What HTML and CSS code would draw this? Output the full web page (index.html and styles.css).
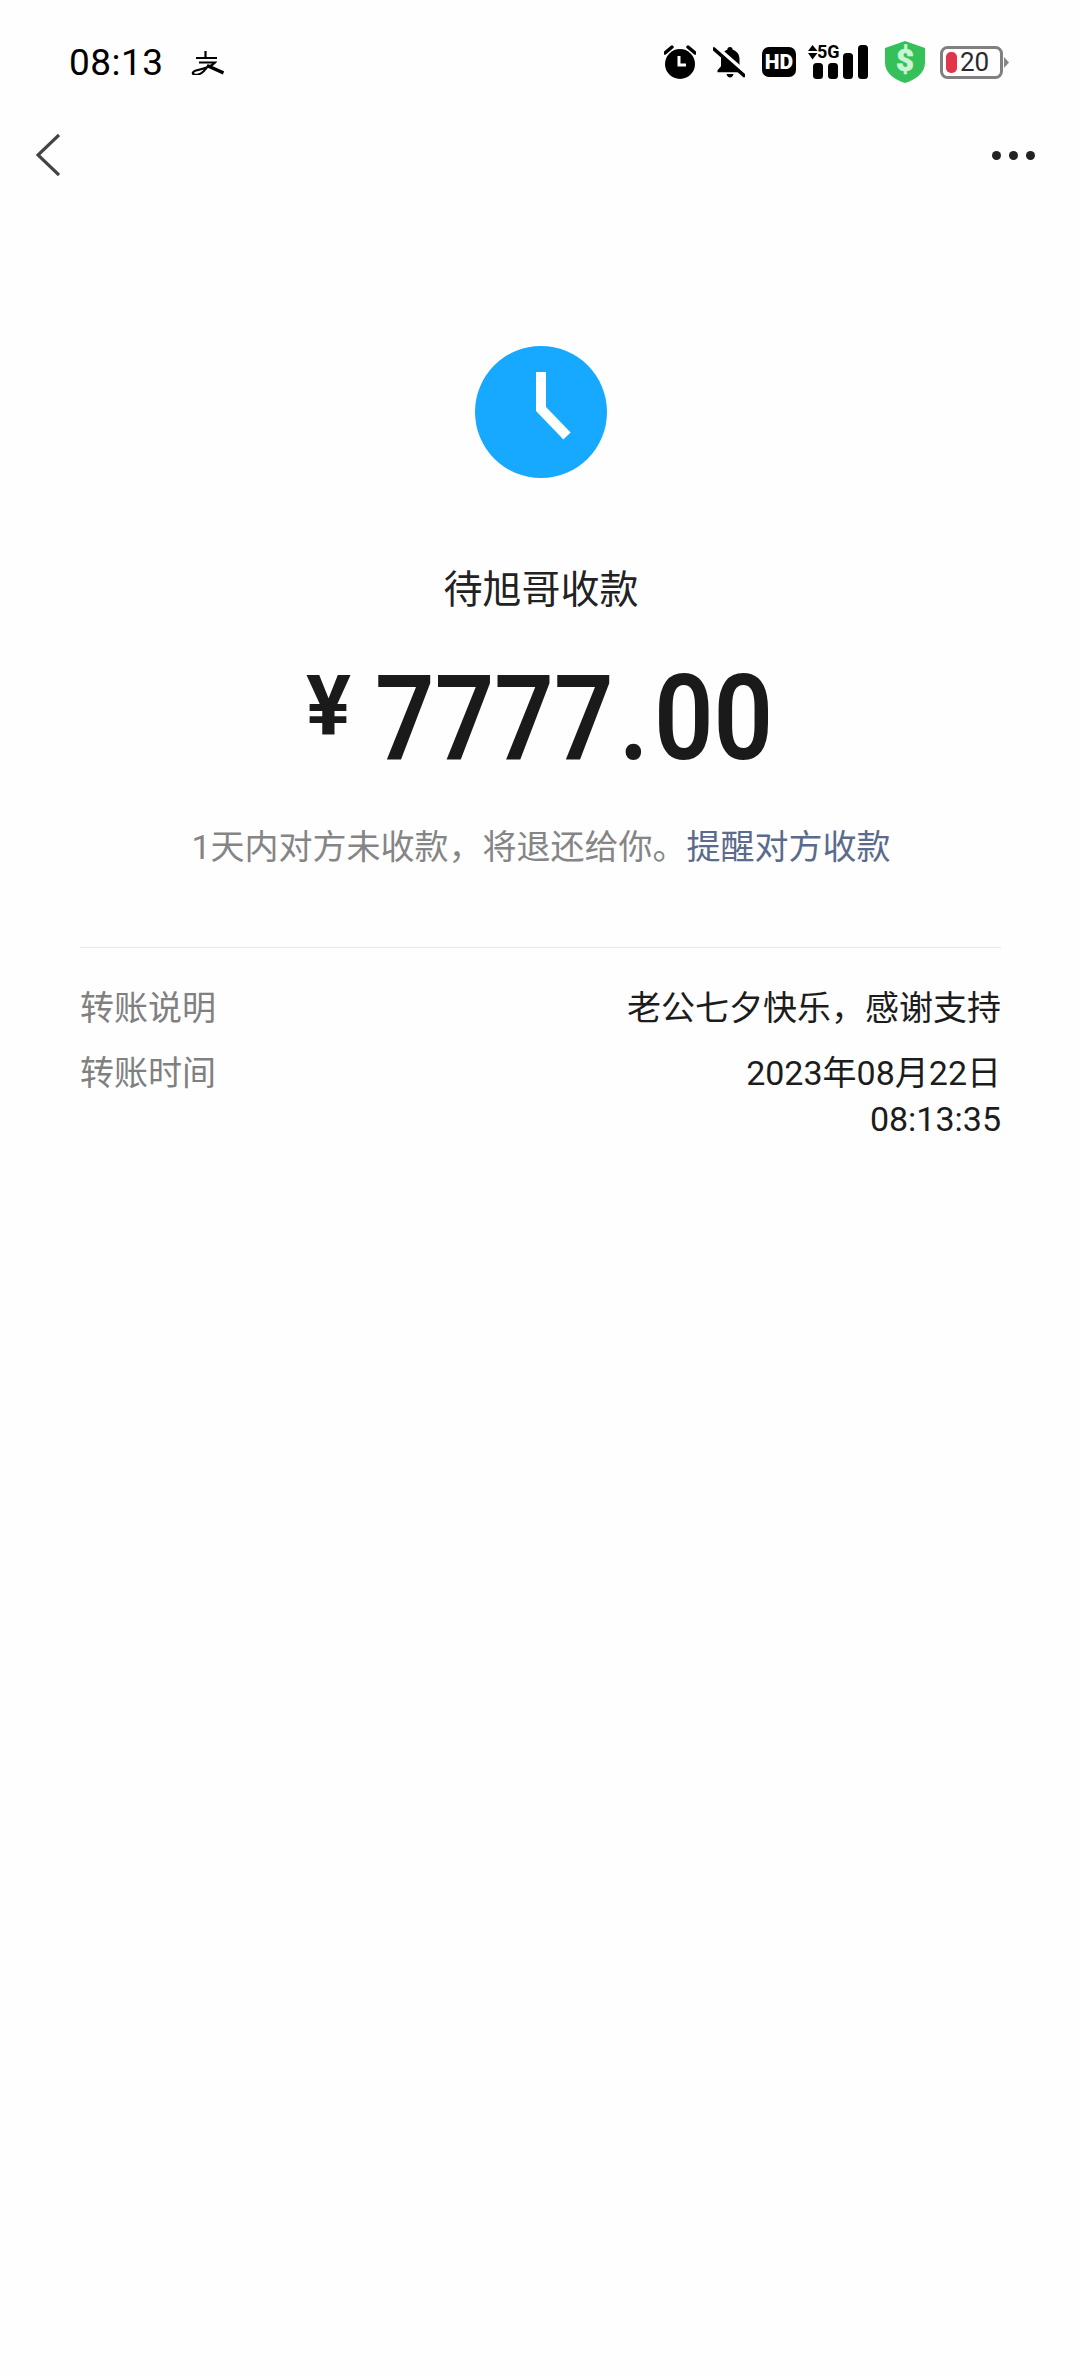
FILE: index.html
```html
<!DOCTYPE html>
<html>
<head>
    <title>转账详情</title>
    <link rel="stylesheet" href="styles.css">
</head>
<body>
    <div class="page">
        <!-- Status bar -->
        <div class="status-bar">
            <span class="time">08:13</span>
            <svg class="alipay-icon" viewBox="0 0 33 24" fill="none" stroke="#000">
                <path d="M14.500 0V7M5 7H26M8 11.500H24C21 15 12 18 5 19.500C0 21 1 24.500 7 23.500C12 22.500 15 18 17 15" stroke-width="2.200"/>
                <path d="M16 14.500L32.500 22" stroke-width="3.400"/>
            </svg>
            <div class="status-icons">
                <svg class="icon-alarm" viewBox="0 0 32 34">
                    <circle cx="16" cy="19" r="15"/>
                    <path d="M15 11V20H22" fill="none" stroke="#fff" stroke-width="3"/>
                    <path d="M1 8L8 2M31 8L24 2" fill="none" stroke="#000" stroke-width="3.400" stroke-linecap="round"/>
                </svg>
                <svg class="icon-bell" viewBox="0 0 32 32">
                    <path d="M17 1C18.700 1 19.700 2.200 19.700 3.700C24.200 5 26.500 8.700 26.500 13.200V20.200L30 24.200V26.200H4.500V24.200L8 20.200V13.200C8 8.700 10.500 5 14.300 3.700C14.300 2.200 15.300 1 17 1Z"/>
                    <path d="M13.500 28H20.500C20 30.400 18.500 31.600 17 31.600S14 30.400 13.500 28Z"/>
                    <path d="M2 0L33 27" fill="none" stroke="#fff" stroke-width="4"/>
                    <path d="M1 3L31 29.500" fill="none" stroke="#000" stroke-width="3.600" stroke-linecap="round"/>
                </svg>
                <svg class="icon-hd" viewBox="0 0 34 30">
                    <rect width="34" height="30" rx="7"/>
                    <text x="17" y="22" text-anchor="middle" class="hd-text">HD</text>
                </svg>
                <svg class="icon-signal" viewBox="0 0 60 36">
                    <path d="M4.500 1L9.500 7H0ZM0 9H9.500L4.500 15.500Z"/>
                    <text x="9" y="13.500" class="fiveg-text">5G</text>
                    <rect x="5" y="19" width="10" height="16" rx="3.500"/>
                    <rect x="20" y="19" width="10" height="16" rx="3.500"/>
                    <rect x="35" y="9" width="10" height="26" rx="3.500"/>
                    <rect x="50" y="1" width="10" height="34" rx="3.500"/>
                </svg>
                <svg class="icon-shield" viewBox="0 0 40 42">
                    <path d="M20 0L40 7V22C40 32 30 39 20 42C10 39 0 32 0 22V7Z" fill="#35c05a"/>
                    <text x="20" y="30" text-anchor="middle" class="dollar-text">$</text>
                </svg>
                <svg class="icon-battery" viewBox="0 0 69 33">
                    <rect x="1.500" y="1.500" width="60" height="30" rx="6" fill="none" stroke="#808080" stroke-width="3"/>
                    <rect x="6" y="6" width="11" height="21" rx="5" fill="#e0354a"/>
                    <text x="20" y="25" class="battery-text">20</text>
                    <path d="M64 11L69 16.500L64 22Z" fill="#888"/>
                </svg>
            </div>
        </div>

        <!-- Nav bar -->
        <div class="nav-bar">
            <svg class="back-icon" viewBox="0 0 24 44" fill="none" stroke="#444" stroke-width="3.200">
                <path d="M23 2L2 22L23 42"/>
            </svg>
            <div class="more-btn">
                <span class="dot"></span>
                <span class="dot"></span>
                <span class="dot"></span>
            </div>
        </div>

        <!-- Transfer summary -->
        <div class="summary">
            <svg class="clock-icon" viewBox="0 0 132 132">
                <circle cx="66" cy="66" r="66" fill="#16a9ff"/>
                <path d="M66 26V63L92 90" fill="none" stroke="#fff" stroke-width="10"/>
            </svg>
            <div class="summary-title">待旭哥收款</div>
            <div class="amount">
                <span class="amount-yen">¥</span>
                <span class="amount-value">7777<span class="amount-point">.</span>00</span>
            </div>
            <div class="hint">1天内对方未收款&#65292;将退还给你。<a href="#" class="hint-link">提醒对方收款</a></div>
        </div>

        <!-- Transfer details -->
        <div class="details">
            <div class="detail-row">
                <div class="detail-label">转账说明</div>
                <div class="detail-value">老公七夕快乐&#65292;感谢支持</div>
            </div>
            <div class="detail-row">
                <div class="detail-label">转账时间</div>
                <div class="detail-value">2023年08月22日<br>08:13:35</div>
            </div>
        </div>
    </div>
</body>
</html>
```

FILE: styles.css
```css
body {
    margin: 0;
    background: #fefefe;
    font-family: Roboto, "Noto Sans CJK SC", sans-serif;
}
.page {
    display: flex;
    flex-direction: column;
    width: 1080px;
    min-height: 2376px;
}
.status-bar {
    display: flex;
    align-items: center;
    height: 124px;
    padding: 0 71px 0 69px;
}
.time {
    font-size: 37px;
    letter-spacing: 0.5px;
    color: #000;
}
.alipay-icon {
    width: 33px;
    height: 24px;
    margin-left: 27px;
    margin-top: 2px;
}
.status-icons {
    display: flex;
    align-items: center;
    margin-left: auto;
}
.icon-alarm {
    width: 32px;
    height: 34px;
}
.icon-bell {
    width: 32px;
    height: 32px;
    margin-left: 17px;
}
.icon-hd {
    width: 34px;
    height: 30px;
    margin-left: 17px;
}
.icon-signal {
    width: 60px;
    height: 36px;
    margin-left: 12px;
}
.icon-shield {
    width: 40px;
    height: 42px;
    margin-left: 17px;
}
.icon-battery {
    width: 69px;
    height: 33px;
    margin-left: 15px;
}
.hd-text {
    font-size: 21px;
    font-weight: 900;
    fill: #fff;
}
.fiveg-text {
    font-size: 18px;
    font-weight: 700;
}
.dollar-text {
    font-size: 31px;
    font-weight: 900;
    fill: #c9f5d3;
    stroke: #c9f5d3;
    stroke-width: 0.6px;
}
.battery-text {
    font-size: 26px;
    fill: #2a2a2a;
}
.nav-bar {
    display: flex;
    align-items: center;
    justify-content: space-between;
    height: 62px;
    padding: 0 45px 0 36px;
}
.back-icon {
    width: 24px;
    height: 44px;
}
.more-btn {
    display: flex;
    gap: 8px;
}
.dot {
    width: 9px;
    height: 9px;
    border-radius: 50%;
    background: #222;
}
.summary {
    display: flex;
    flex-direction: column;
    align-items: center;
    margin-top: 160px;
    padding-left: 2px;
}
.clock-icon {
    width: 132px;
    height: 132px;
}
.summary-title {
    margin-top: 84px;
    font-size: 39px;
    line-height: 56px;
    color: #222;
}
.amount {
    display: flex;
    align-items: flex-start;
    gap: 24px;
    margin-top: 41px;
    color: #1a1a1a;
}
.amount-yen {
    margin-top: 6px;
    font-size: 84px;
    line-height: 84px;
    font-weight: 700;
}
/* digits in the reference are narrower than Roboto */
.amount-value {
    margin-right: -49px;
    font-size: 118px;
    line-height: 120px;
    font-weight: 600;
    transform: scaleX(0.885);
    transform-origin: left;
}
.amount-point {
    padding: 0 6px;
}
.hint {
    margin-top: 43px;
    font-size: 34px;
    line-height: 50px;
    color: #858585;
}
.hint-link {
    color: #5b6b8c;
    text-decoration: none;
}
.details {
    margin: 75px 79px 0 80px;
    padding-top: 37px;
    border-top: 1px solid #e8e8e8;
}
.detail-row {
    display: flex;
    justify-content: space-between;
    margin-bottom: 19px;
    font-size: 34px;
    line-height: 46px;
}
.detail-label {
    color: #808080;
}
.detail-value {
    text-align: right;
    color: #1c1c1c;
}
```
